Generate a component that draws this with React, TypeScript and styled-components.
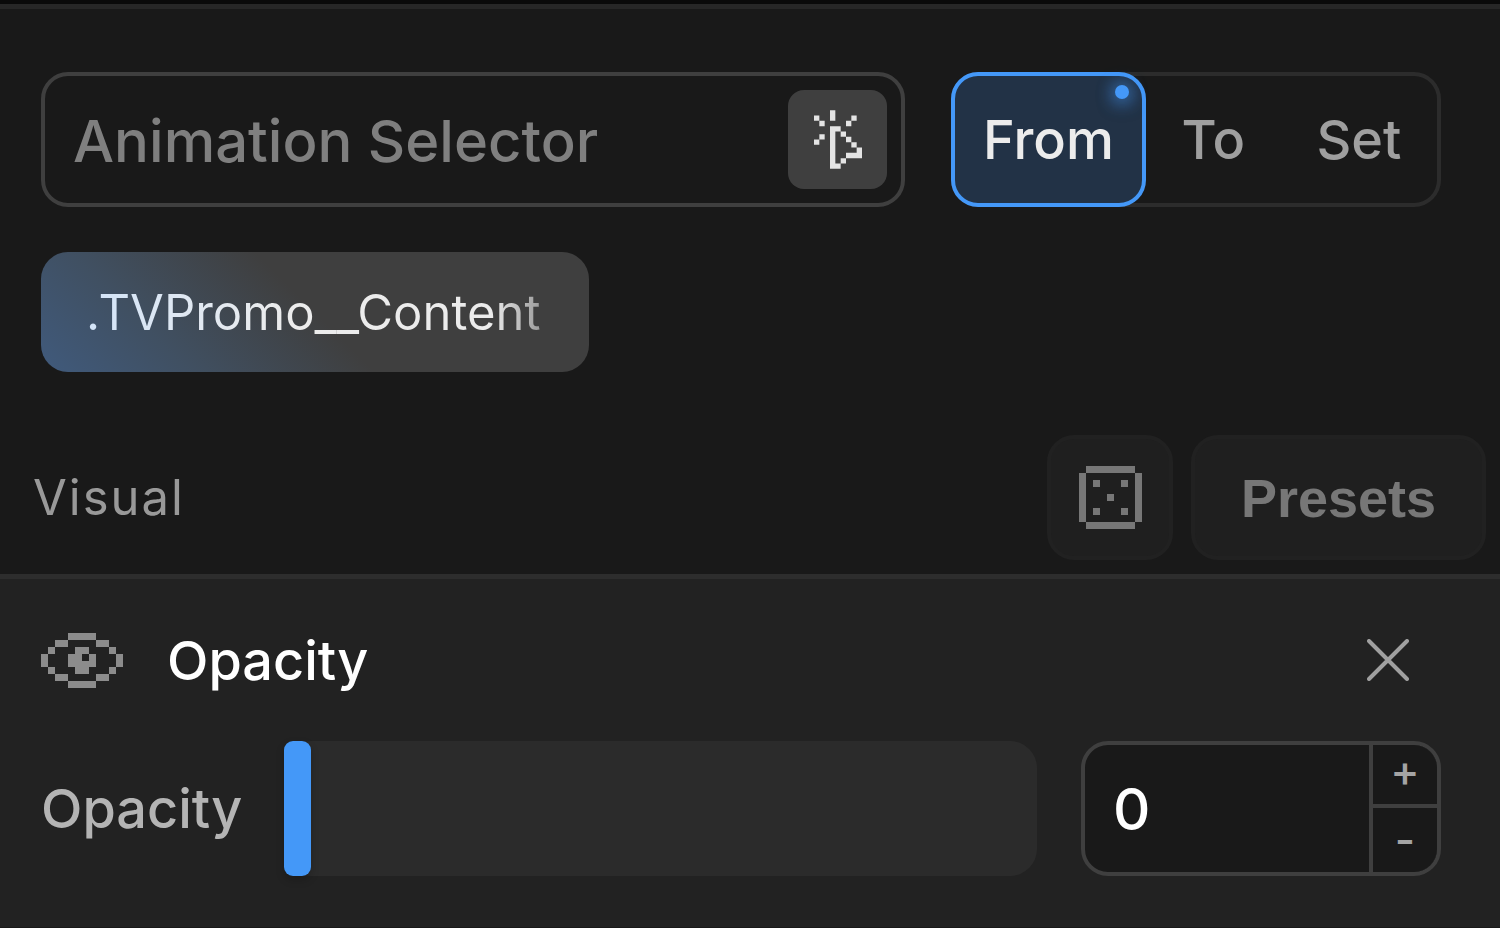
import React, { useState } from "react";
import styled, { createGlobalStyle, css } from "styled-components";

const GlobalStyle = createGlobalStyle`
  *, *::before, *::after { box-sizing: border-box; }
  body {
    margin: 0;
    background: #191919;
    font-family: Inter, "Liberation Sans", sans-serif;
    color: #fff;
  }
  button, input { font: inherit; color: inherit; margin: 0; }
  button { cursor: pointer; padding: 0; border: 0; background: none; }
`;

const Panel = styled.main`
  display: flex;
  flex-direction: column;
  min-height: 100vh;
  border-top: 4px solid #0a0a0a;
`;

const TargetSection = styled.section`
  display: flex;
  flex-direction: column;
  align-items: flex-start;
  gap: 45px;
  padding: 63px 59px 63px 41px;
  border-top: 5px solid #272727;
`;

const TargetRow = styled.div`
  display: flex;
  gap: 46px;
  width: 100%;
`;

const SelectorField = styled.div`
  display: flex;
  align-items: center;
  flex: 1;
  min-width: 0;
  height: 135px;
  padding: 0 14px 0 28px;
  border: 4px solid #3f3f3f;
  border-radius: 27px;
`;

const SelectorInput = styled.input`
  flex: 1;
  min-width: 0;
  height: 100%;
  padding: 2px 0 0;
  border: 0;
  outline: 0;
  background: none;
  font-size: 58px;
  font-weight: 500;
  &::placeholder { color: #7f7f7f; opacity: 1; }
`;

const PickButton = styled.button`
  display: grid;
  place-items: center;
  width: 99px;
  height: 99px;
  border-radius: 16px;
  background: #3f3f3f;
`;

const Segments = styled.fieldset`
  display: flex;
  width: 490px;
  height: 135px;
  margin: 0;
  padding: 0 4px 0 0;
  border: 0;
  border-radius: 27px;
  box-shadow: inset 0 0 0 4px #2c2c2c;
`;

const Segment = styled.label<{ $active: boolean }>`
  position: relative;
  display: flex;
  align-items: center;
  justify-content: center;
  flex: 1 0 auto;
  padding: 0 30px;
  border: 4px solid transparent;
  border-radius: 27px;
  font-size: 54px;
  font-weight: 500;
  color: #9f9f9f;
  cursor: pointer;
  ${(p) =>
    p.$active &&
    css`
      flex-grow: 0;
      padding: 0 28px;
      border-color: #4498f8;
      background: #223246;
      color: #ececec;
    `}
`;

const HiddenRadio = styled.input`
  position: absolute;
  inset: 0;
  width: 100%;
  height: 100%;
  opacity: 0;
  cursor: pointer;
`;

const ActiveDot = styled.span`
  position: absolute;
  top: 9px;
  right: 13px;
  width: 14px;
  height: 14px;
  border-radius: 50%;
  background: #4498f8;
  box-shadow: 0 0 18px #4498f8, 0 4px 18px rgba(68, 152, 248, 0.5);
`;

const Tag = styled.button`
  height: 120px;
  padding: 0 48px 0 45px;
  border-radius: 27px;
  background: linear-gradient(45deg, #405a7c 0%, #404f60 24%, #3f3f3f 50%);
  font-size: 49px;
`;

const TagText = styled.span`
  background: linear-gradient(90deg, #d3e4f8 0%, #ececec 45%, #ececec 89%, #8c8c8c 102%);
  background-clip: text;
  -webkit-background-clip: text;
  color: transparent;
`;

const GroupHeader = styled.header`
  display: flex;
  align-items: center;
  gap: 18px;
  padding: 0 14px 14px 33px;
  border-bottom: 5px solid #2d2d2d;
`;

const GroupTitle = styled.h2`
  flex: 1;
  margin: 0;
  font-size: 49px;
  font-weight: 400;
  letter-spacing: 2px;
  color: #999;
`;

const HeaderButton = styled.button<{ $wide?: boolean }>`
  display: grid;
  place-items: center;
  width: ${(p) => (p.$wide ? 295 : 126)}px;
  height: 125px;
  border: 4px solid #212121;
  border-radius: 27px;
  background: #1f1f1f;
  font-family: "Liberation Sans", Arial, sans-serif;
  font-size: 54px;
  font-weight: 700;
  color: #777;
`;

const PropertySection = styled.section`
  display: flex;
  flex-direction: column;
  flex: 1;
  gap: 45px;
  padding: 45px 59px 50px 41px;
  border-bottom: 1px solid #191919;
  background: #222;
`;

const PropertyHeader = styled.div`
  display: flex;
  align-items: center;
  gap: 44px;
  height: 72px;
  padding: 0 32px 0 0;
`;

const PropertyTitle = styled.h3`
  flex: 1;
  margin: 0;
  font-size: 54px;
  font-weight: 500;
`;

const CloseButton = styled.button`
  display: grid;
  place-items: center;
`;

const ControlRow = styled.div`
  display: grid;
  grid-template-columns: 199px 1fr 360px;
  align-items: center;
  gap: 44px;
`;

const ControlLabel = styled.label`
  font-size: 54px;
  font-weight: 500;
  color: #b4b4b4;
`;

const Slider = styled.input`
  appearance: none;
  width: 100%;
  height: 135px;
  border-radius: 27px;
  background: #2b2b2b;
  &::-webkit-slider-thumb {
    appearance: none;
    width: 27px;
    height: 135px;
    border-radius: 9px;
    background: #4498f8;
    box-shadow: 0 4px 9px rgba(0, 0, 0, 0.2);
  }
`;

const NumberField = styled.div`
  display: flex;
  height: 135px;
  border: 4px solid #3f3f3f;
  border-radius: 27px;
  background: #191919;
  overflow: hidden;
`;

const NumberInput = styled.input`
  flex: 1;
  min-width: 0;
  padding: 0 28px;
  border: 0;
  outline: 0;
  background: none;
  font-size: 58px;
  font-weight: 500;
`;

const Stepper = styled.div`
  display: grid;
  grid-template-rows: 59px 1fr;
  gap: 4px;
  width: 68px;
  padding-left: 4px;
  background: #3f3f3f;
`;

const StepButton = styled.button`
  display: flex;
  justify-content: center;
  background: #191919;
  color: #a4a4a4;
  font-size: 44px;
  font-weight: 500;
  line-height: 52px;
  &:last-child { line-height: 64px; }
`;

const PixelIcon = styled.svg`
  display: block;
  fill: currentColor;
`;

const EYE = [
  "....####....",
  "..##....##..",
  ".#...##...#.",
  "#...##.#...#",
  "#...####...#",
  ".#...##...#.",
  "..##....##..",
  "....####....",
];

const DICE = [
  ".#######.",
  "#.......#",
  "#.#...#.#",
  "#.......#",
  "#...#...#",
  "#.......#",
  "#.#...#.#",
  "#.......#",
  ".#######.",
];

function Pixels({ rows, width, color }: { rows: string[]; width: number; color: string }) {
  const cols = rows[0].length;
  const path = rows
    .flatMap((row, y) => [...row].map((c, x) => (c === "#" ? `M${x} ${y}h1v1h-1z` : "")))
    .join("");
  return (
    <PixelIcon
      width={width}
      height={Math.round((width * rows.length) / cols)}
      viewBox={`0 0 ${cols} ${rows.length}`}
      color={color}
      shapeRendering="crispEdges"
      aria-hidden="true"
    >
      <path d={path} />
    </PixelIcon>
  );
}

function PickIcon() {
  return (
    <PixelIcon width="48" height="59" viewBox="0 0 18 22" color="#e4e4e4" aria-hidden="true">
      <path d="M6 0h2v4h-2zM0 2h2v2h-2zM2 4h2v2h-2zM14 2h2v2h-2zM12 4h2v2h-2zM2 9h2v2h-2zM0 11h2v2h-2z" />
      <path d="M6 6h4v2h-2v12h2v2h-4zM10 8h2v2h-2zM12 10h2v2h-2zM14 12h2v2h-2zM16 14h2v4h-6v-2h4zM10 18h2v2h-2z" />
    </PixelIcon>
  );
}

const MODES = ["From", "To", "Set"];

export default function App() {
  const [mode, setMode] = useState("From");
  const [opacity, setOpacity] = useState(0);
  const change = (v: number) => setOpacity(Math.min(100, Math.max(0, v || 0)));

  return (
    <>
      <GlobalStyle />
      <Panel>
        <TargetSection>
          <TargetRow>
            <SelectorField>
              <SelectorInput aria-label="Animation Selector" placeholder="Animation Selector" />
              <PickButton aria-label="Pick element">
                <PickIcon />
              </PickButton>
            </SelectorField>
            <Segments aria-label="Animation mode">
              {MODES.map((m) => (
                <Segment key={m} $active={m === mode}>
                  <HiddenRadio type="radio" name="mode" checked={m === mode} onChange={() => setMode(m)} />
                  {m}
                  {m === mode && <ActiveDot />}
                </Segment>
              ))}
            </Segments>
          </TargetRow>
          <Tag>
            <TagText>.TVPromo__Content</TagText>
          </Tag>
        </TargetSection>

        <GroupHeader>
          <GroupTitle>Visual</GroupTitle>
          <HeaderButton aria-label="Randomize">
            <Pixels rows={DICE} width={63} color="#777" />
          </HeaderButton>
          <HeaderButton $wide>Presets</HeaderButton>
        </GroupHeader>

        <PropertySection>
          <PropertyHeader>
            <Pixels rows={EYE} width={82} color="#8c8c8c" />
            <PropertyTitle>Opacity</PropertyTitle>
            <CloseButton aria-label="Remove Opacity">
              <svg
                width="42"
                height="42"
                viewBox="0 0 42 42"
                stroke="#a0a0a0"
                strokeWidth="4"
                strokeLinecap="round"
                aria-hidden="true"
              >
                <path d="M2 2L40 40M40 2L2 40" />
              </svg>
            </CloseButton>
          </PropertyHeader>
          <ControlRow>
            <ControlLabel htmlFor="opacity">Opacity</ControlLabel>
            <Slider
              id="opacity"
              type="range"
              min={0}
              max={100}
              value={opacity}
              onChange={(e) => change(Number(e.target.value))}
            />
            <NumberField>
              <NumberInput
                aria-label="Opacity value"
                inputMode="numeric"
                value={opacity}
                onChange={(e) => change(Number(e.target.value))}
              />
              <Stepper>
                <StepButton aria-label="Increase" onClick={() => change(opacity + 1)}>+</StepButton>
                <StepButton aria-label="Decrease" onClick={() => change(opacity - 1)}>-</StepButton>
              </Stepper>
            </NumberField>
          </ControlRow>
        </PropertySection>
      </Panel>
    </>
  );
}
